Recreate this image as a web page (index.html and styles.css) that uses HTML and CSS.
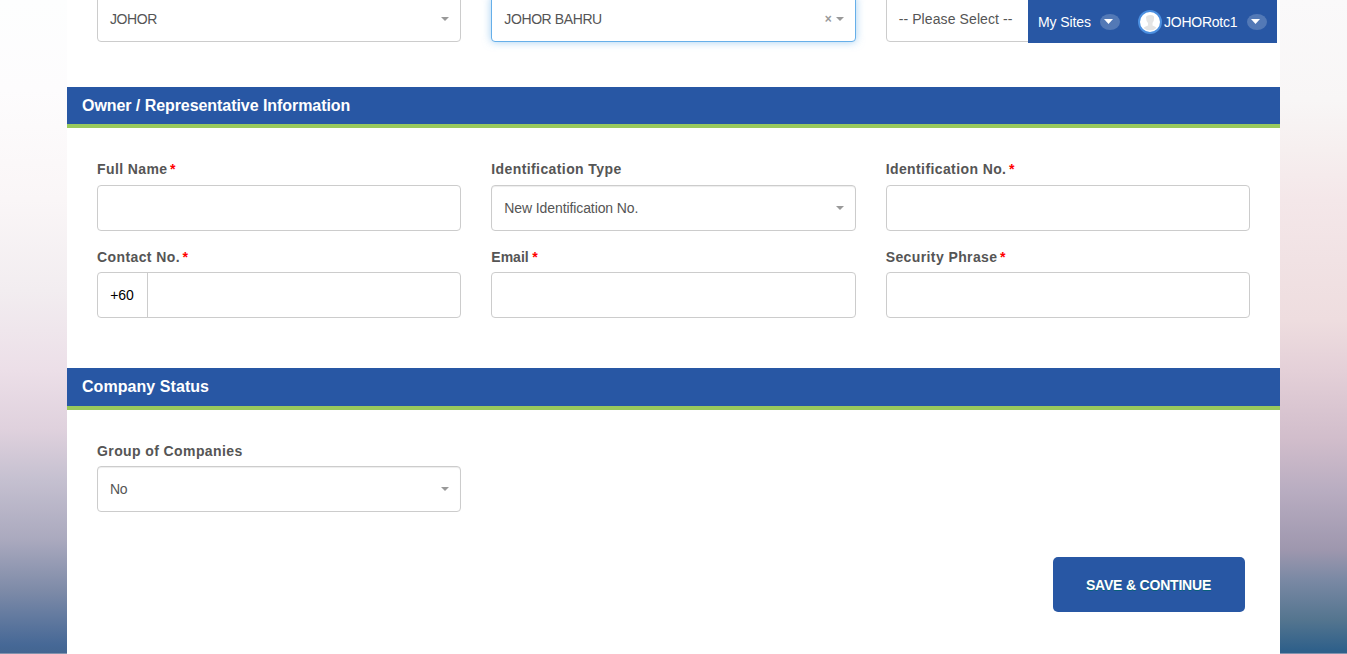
FILE: index.html
```
<!DOCTYPE html>
<html lang="en">
<head>
<meta charset="utf-8">
<title>Company Registration</title>
<link rel="stylesheet" href="styles.css">
</head>
<body>
<nav class="topbar">
  <span class="sites">My Sites</span>
  <span class="pill"><svg width="10" height="6" viewBox="0 0 10 6"><path d="M0 0h9L4.500 5z" fill="#fff"/></svg></span>
  <svg class="avatar" width="24" height="24" viewBox="0 0 24 24"><circle cx="12" cy="12" r="11" fill="#fff" stroke="#4b8fe0" stroke-width="2"/><path d="M8 7.500Q8 5 12.500 5T16 8.500Q16 11.500 14.500 13V15.500Q18 16.500 18.500 18Q12 23 5.500 18Q6.500 16.500 10 15.500V13Q8 11 8 7.500z" fill="#e4e4e4"/></svg>
  <span class="user">JOHORotc1</span>
  <span class="pill"><svg width="10" height="6" viewBox="0 0 10 6"><path d="M0 0h9L4.500 5z" fill="#fff"/></svg></span>
</nav>
<main class="page">
  <div class="grid first">
    <div class="control select"><span class="v-place">JOHOR</span><i class="caret"></i></div>
    <div class="control select focused"><span class="v-place">JOHOR BAHRU</span><b class="clear">×</b><i class="caret"></i></div>
    <div class="control select"><span class="placeholder">-- Please Select --</span><i class="caret"></i></div>
  </div>
  <h2 class="heading owner">Owner / Representative Information</h2>
  <div class="grid details">
    <div class="field roomy"><label>Full Name</label><em>*</em><div class="control"></div></div>
    <div class="field roomy"><label>Identification Type</label><div class="control select shade"><span class="v-type">New Identification No.</span><i class="caret"></i></div></div>
    <div class="field roomy"><label>Identification No.</label><em>*</em><div class="control"></div></div>
    <div class="field"><label>Contact No.</label><em>*</em><div class="control"><span class="prefix">+60</span></div></div>
    <div class="field"><label class="l-email">Email</label><em>*</em><div class="control"></div></div>
    <div class="field"><label>Security Phrase</label><em>*</em><div class="control"></div></div>
  </div>
  <h2 class="heading status">Company Status</h2>
  <div class="grid group">
    <div class="field"><label>Group of Companies</label><div class="control select shade"><span class="v-place">No</span><i class="caret"></i></div></div>
  </div>
  <div class="actions"><button class="save">SAVE &amp; CONTINUE</button></div>
</main>
</body>
</html>
```
FILE: styles.css
```
* { box-sizing: border-box; }
body {
  margin: 0;
  height: 654px;
  overflow: hidden;
  position: relative;
  font: 14px/20px "Liberation Sans", Arial, sans-serif;
  color: #555;
  background:
    linear-gradient(#8192ad, #8192ad) 0 100% / 100% 1px no-repeat,
    linear-gradient(#fdfefe 0, #fdfcfd 90px, #faf6f7 200px, #f2edf0 290px, #ecdfe8 370px, #dfd1dd 430px, #c5c0d0 480px, #aaa9be 540px, #7e8ba8 590px, #466896 645px, #436590 654px) 0 0 / 67px 100% no-repeat,
    linear-gradient(#faf9fa 0, #f8f6f6 100px, #f6efef 150px, #f4e7e9 200px, #eedddf 320px, #e4d0d8 370px, #d1bdcb 440px, #b9adc1 490px, #9e97ae 550px, #7a89a4 580px, #54758f 620px, #2f608a 650px) 100% 0 / 67px 100% no-repeat;
}
.page {
  display: flow-root;
  width: 1213px;
  height: 654px;
  margin: 0 auto;
  background: #fff;
}
.grid {
  display: grid;
  grid-template-columns: repeat(3, 1fr);
  column-gap: 30px;
  padding: 0 30px;
}
.first { margin-top: -4px; padding-bottom: 45px; }
.control {
  height: 46px;
  border: 1px solid #ccc;
  border-radius: 4px;
  background: #fff;
  display: flex;
  align-items: center;
}
.select { padding: 0 11px 0 12px; }
.select span { flex: 1; }
.select .v-place { letter-spacing: -.4px; }
.select .v-type { letter-spacing: -.1px; }
.select .placeholder { letter-spacing: .1px; }
.shade { box-shadow: inset 0 1px 1px rgba(0, 0, 0, .075); }
.focused {
  border-color: #66afe9;
  box-shadow: 0 0 8px rgba(102, 175, 233, .6);
}
.caret {
  border: 4px solid transparent;
  border-top-color: #999;
  border-bottom: 0;
}
.clear { font-size: 12px; color: #999; margin-right: 4px; }
.heading {
  margin: 0;
  padding: 0 15px;
  border-bottom: 4px solid #99c95c;
  background: #2857a4;
  color: #fff;
  font-size: 16px;
  font-weight: bold;
}
.owner { height: 41px; line-height: 37px; letter-spacing: -.06px; }
.status { height: 42px; line-height: 37px; letter-spacing: .06px; }
.details { height: 240px; padding-top: 31px; grid-template-rows: 88px 82px; }
.group { padding-top: 31px; }
.field { white-space: nowrap; }
.field label {
  display: inline-block;
  font-weight: bold;
  line-height: 20px;
  letter-spacing: .4px;
}
.field .l-email { letter-spacing: 0; }
.field .control { margin-top: 5px; }
.roomy .control { margin-top: 6px; }
.field em {
  margin-left: 2px;
  color: red;
  font-style: italic;
  font-weight: bold;
  line-height: 20px;
}
.field .l-email + em { margin-left: 3px; }
.prefix {
  width: 50px;
  height: 100%;
  padding-right: 1px;
  border-right: 1px solid #ccc;
  color: #000;
  display: flex;
  align-items: center;
  justify-content: center;
}
.actions { display: flex; justify-content: flex-end; padding: 45px 35px 0; }
.save {
  width: 192px;
  height: 55px;
  padding: 0 7px 0 6px;
  border: 0;
  border-radius: 5px;
  background: #2857a4;
  color: #fff;
  font: bold 14px "Liberation Sans", Arial, sans-serif;
  letter-spacing: -.2px;
  text-shadow: 0 1px 0 #076078;
}
.topbar {
  position: absolute;
  left: 1028px;
  top: 0;
  width: 249px;
  height: 43px;
  padding-left: 10px;
  background: #2857a4;
  color: #fff;
  display: flex;
  align-items: center;
}
.sites { width: 62px; letter-spacing: -.1px; }
.pill {
  width: 20px;
  height: 16px;
  border-radius: 50%;
  background: #5379b6;
  display: flex;
  align-items: center;
  padding-left: 4px;
}
.avatar { margin: 0 1px 0 18px; }
.user { width: 84px; padding-left: 1px; letter-spacing: -.25px; }
```
